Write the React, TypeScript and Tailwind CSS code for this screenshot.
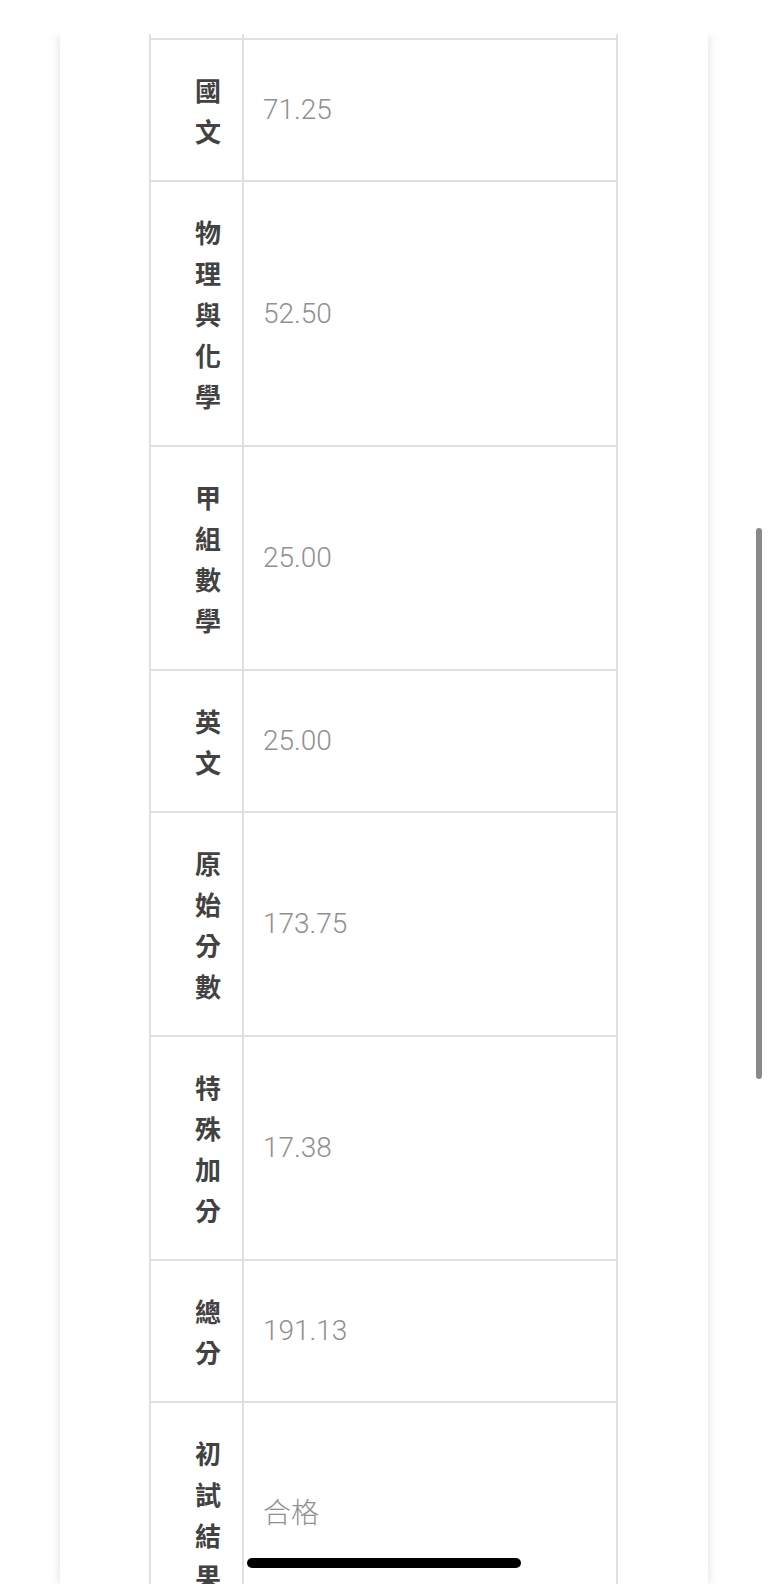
const rows = [
  { label: "國文", value: "71.25" },
  { label: "物理與化學", value: "52.50" },
  { label: "甲組數學", value: "25.00" },
  { label: "英文", value: "25.00" },
  { label: "原始分數", value: "173.75" },
  { label: "特殊加分", value: "17.38" },
  { label: "總分", value: "191.13" },
  { label: "初試結果", value: "合格" },
]

const cjk = "font-['Noto_Sans_CJK_TC','Noto_Sans_CJK_SC',sans-serif]"

function ScoreRow({ label, value }: { label: string; value: string }) {
  return (
    <div className="flex border-b-2 border-[#e0e0e0]">
      <div
        className={`w-[93px] shrink-0 border-r-2 border-[#e0e0e0] py-[29px] pr-[21px] text-right text-[26px] leading-[41px] font-bold text-[#424242] ${cjk}`}
      >
        {label.split("").map((ch, i) => (
          <div key={i}>{ch}</div>
        ))}
      </div>
      <div
        className="flex flex-1 items-center pl-[19px] text-[28px] font-light text-[#909090] font-['Roboto','Noto_Sans_CJK_TC',sans-serif]"
      >
        {value}
      </div>
    </div>
  )
}

export default function App() {
  return (
    <div className="relative flex h-[1584px] w-[768px] flex-col overflow-hidden bg-white">
      {/* header strip */}
      <div className="h-[34px] shrink-0 bg-white" />

      {/* card */}
      <div className="flex-1 overflow-hidden px-[60px]">
        <div className="h-full w-[648px] bg-white shadow-[0_0_10px_rgba(0,0,0,0.13)]">
          <div className="ml-[89px] w-[469px] border-x-2 border-[#e0e0e0]">
            {/* tail of previous row */}
            <div className="flex h-[4px]">
              <div className="w-[93px] border-r-2 border-[#e0e0e0]" />
            </div>
            <div className="border-t-2 border-[#e0e0e0]">
              {rows.map((r) => (
                <ScoreRow key={r.label} label={r.label} value={r.value} />
              ))}
            </div>
          </div>
        </div>
      </div>

      {/* scroll indicator */}
      <div className="absolute left-[756px] top-[528px] h-[551px] w-[6px] rounded-full bg-[#8a8a8a]" />

      {/* home indicator */}
      <div className="absolute left-[247px] top-[1558px] h-[10px] w-[274px] rounded-full bg-black" />
    </div>
  )
}
